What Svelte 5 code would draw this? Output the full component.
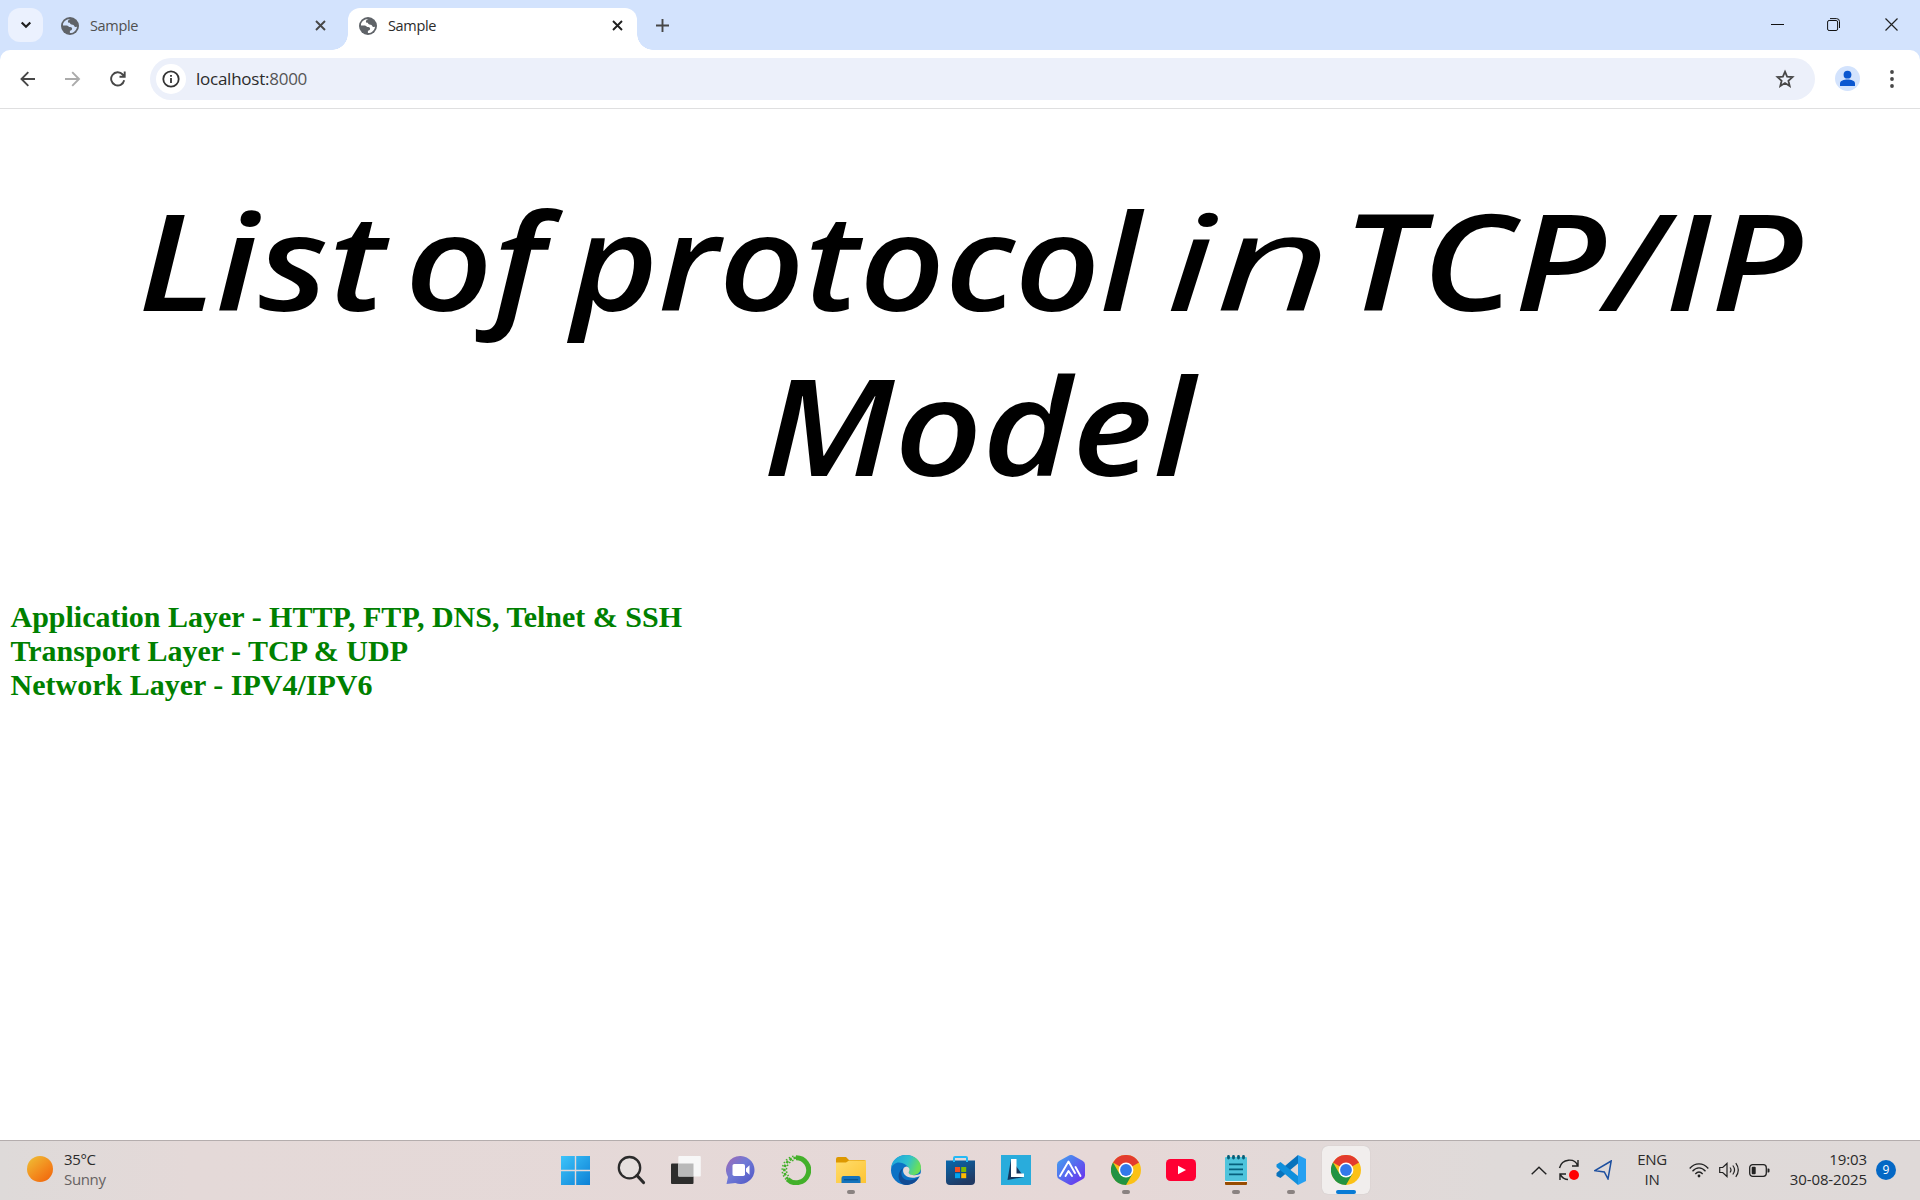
<script>
  const tabs = [
    { title: 'Sample', active: false },
    { title: 'Sample', active: true }
  ];
  const apps = [
    { name: 'start' }, { name: 'search' }, { name: 'taskview' }, { name: 'chat' }, { name: 'ring' },
    { name: 'folder', open: true }, { name: 'edge' }, { name: 'store' }, { name: 'lenovo' }, { name: 'hex' },
    { name: 'chrome', open: true }, { name: 'youtube' }, { name: 'notepad', open: true },
    { name: 'code', open: true }, { name: 'chrome', active: true }
  ];
  const words = [
    { t: 'List', x: 138, y: 202, w: 248 },
    { t: 'of', x: 405, y: 202, w: 140 },
    { t: 'protocol', x: 571, y: 202, w: 570 },
    { t: 'in', x: 1165, y: 202, w: 166, light: true },
    { t: 'TCP/IP', x: 1342, y: 202, w: 460 },
    { t: 'Model', x: 763, y: 367, w: 432 }
  ];
  const layers = [
    'Application Layer - HTTP, FTP, DNS, Telnet & SSH',
    'Transport Layer - TCP & UDP',
    'Network Layer - IPV4/IPV6'
  ];
</script>

<div class="screen">
  <header class="tabstrip">
    <button class="tabsearch" aria-label="Search tabs">
      <svg width="12" height="8" viewBox="0 0 12 8"><path d="M1.7 1.5 6 5.7l4.3-4.2" fill="none" stroke="#1f1f1f" stroke-width="2.2" /></svg>
    </button>
    {#each tabs as tab}
      <div class="tab" class:active={tab.active}>
        <svg class="globe" width="18" height="18" viewBox="0 0 18 18">
          <circle cx="9" cy="9" r="9" fill="#5f6368" />
          <path d="M9.400 1.900C8 2.700 6.900 3.200 6.900 4.500c0 1.300 1 1.400 2 1.300.2 1.600 1.200 1.900 2.700 1.900 1.500 0 1.500 2.200 3 2.300 1 .1 1.400-.5 1.500-1.100-.1 4-3.200 7.200-7.200 7.200v-2.300c1.500-.2 2.300-1 2.200-2.200-.1-1.500-1.600-1.600-2.900-1.700-1-.2-1.200-1.400-2.400-1.400H2C1.800 4.800 5 1.800 9.400 1.900z" fill={tab.active ? '#fff' : '#d3e3fd'} />
          <path d="M3.300 5.300c.8-.8 1.800-1.200 2.700-.9.5 1.300 1.700 2 3 2l.7 1.500c-1.400.5-2.700.2-3.700-.3-1-.3-2.100.1-3.800.2z" fill={tab.active ? '#fff' : '#d3e3fd'} />
        </svg>
        <span>{tab.title}</span>
        <svg class="close" width="11" height="11" viewBox="0 0 11 11"><path d="m1 1 9 9M10 1l-9 9" stroke={tab.active ? '#1f1f1f' : '#474747'} stroke-width="1.9" /></svg>
      </div>
    {/each}
    <svg class="plus" width="13" height="13" viewBox="0 0 13 13"><path d="M6.500 0v13M0 6.500h13" stroke="#474747" stroke-width="1.9" /></svg>
    <div class="window-controls">
      <svg width="13" height="13" viewBox="0 0 13 13"><path d="M0 6.500h13" stroke="#111" /></svg>
      <svg width="13" height="13" viewBox="0 0 13 13" fill="none" stroke="#111"><rect x=".6" y="2.500" width="10" height="10" rx="1.500" /><path d="M3 .6h6.500a3 3 0 0 1 3 3V10" /></svg>
      <svg width="13" height="13" viewBox="0 0 13 13"><path d="m.5.5 12 12M12.500.5l-12 12" stroke="#222" stroke-width="1.200" /></svg>
    </div>
  </header>

  <div class="toolbar-wrap">
    <div class="toolbar">
      <svg class="nav" width="16" height="16" viewBox="0 0 16 16" fill="none" stroke="#474747" stroke-width="1.900"><path d="M15 8H1.800M8.300 1.200 1.500 8l6.800 6.800" /></svg>
      <svg class="nav" width="16" height="16" viewBox="0 0 16 16" fill="none" stroke="#ababab" stroke-width="1.900"><path d="M0 8h13.700M7.200 1.200 14 8l-6.800 6.800" /></svg>
      <svg class="nav" width="16" height="16" viewBox="0 0 16 16" fill="none" stroke="#474747" stroke-width="1.900"><path d="M14.200 9.300A6.600 6.600 0 1 1 12.700 3.500L14.400 5.300M14.700.5v5.200H9.500" /></svg>
      <div class="omnibox">
        <span class="info">
          <svg width="18" height="18" viewBox="0 0 18 18"><circle cx="9" cy="9" r="7.700" fill="none" stroke="#333" stroke-width="1.800" /><path d="M9 8v5M9 5v1.800" stroke="#333" stroke-width="1.800" /></svg>
        </span>
        <span class="url">localhost:<em>8000</em></span>
        <svg class="star" width="20" height="20" viewBox="0 0 20 20"><path d="m10 2.700 2.100 5 5.400.4-4.100 3.600 1.300 5.300-4.700-2.900-4.700 2.900 1.300-5.300-4.100-3.600 5.400-.4z" fill="none" stroke="#474747" stroke-width="1.800" /></svg>
      </div>
      <svg class="profile" width="25" height="25" viewBox="0 0 25 25"><circle cx="12.500" cy="12.500" r="12.500" fill="#d3e3fd" /><circle cx="12.500" cy="8.700" r="3.900" fill="#0b57d0" /><path d="M5 20v-2.500c0-3 4-4 7.500-4s7.500 1 7.500 4V20z" fill="#0b57d0" /></svg>
      <svg class="dots" width="4" height="18" viewBox="0 0 4 18" fill="#474747"><circle cx="2" cy="2" r="1.900" /><circle cx="2" cy="9" r="1.900" /><circle cx="2" cy="16" r="1.900" /></svg>
    </div>
  </div>

  <main>
    <h1>
      <svg width="1920" height="430" viewBox="0 0 1920 430">
        {#each words as word}
          <text class:light={word.light} x={word.x} y={word.y} textLength={word.w} lengthAdjust="spacingAndGlyphs">{word.t}</text>
        {/each}
      </svg>
    </h1>
    <h2>
      {#each layers as layer}
        <span>{layer}</span>
      {/each}
    </h2>
  </main>

  <footer>
    <div class="weather">
      <i></i>
      <div><p>35°C</p><p class="muted">Sunny</p></div>
    </div>
    <nav>
      {#each apps as app}
        <div class="cell">
          <div class="tile" class:current={app.active} class:open={app.open}>
            <svg width="30" height="30" viewBox="0 0 30 30">
              {#if app.name === 'start'}
                <defs><linearGradient id="win" x1="0" y1="0" x2="1" y2="1" gradientUnits="objectBoundingBox"><stop stop-color="#3dc4fa" /><stop offset="1" stop-color="#0d80d5" /></linearGradient></defs>
                <path d="M0 1h13.800v13.800H0zM15.200 1H29v13.800H15.200zM0 16.200h13.800V30H0zM15.200 16.200H29V30H15.200z" fill="url(#win)" />
              {:else if app.name === 'search'}
                <circle cx="13.500" cy="12.700" r="10.700" fill="#e6e0df" stroke="#2b2b2b" stroke-width="2.300" /><path d="m21 20.500 6.500 7" stroke="#2b2b2b" stroke-width="3.200" stroke-linecap="round" />
              {:else if app.name === 'taskview'}
                <rect x="0" y="8.500" width="22.500" height="20.500" rx="1" fill="#2d2d2c" /><rect x="7.300" y="1" width="22.500" height="20.500" rx="1" fill="#f7f7f7" /><path d="M7.300 8.500h15.200v13H7.300z" fill="#b9b9b9" />
              {:else if app.name === 'chat'}
                <defs><linearGradient id="chat" x1="0" y1="0" x2="1" y2="1"><stop stop-color="#a168b3" /><stop offset=".45" stop-color="#6f7ad6" /><stop offset="1" stop-color="#4f55c5" /></linearGradient></defs>
                <path d="M14.800 1a14 14 0 1 1-5.500 27L.5 29 2 22A14 14 0 0 1 14.800 1z" fill="url(#chat)" /><rect x="6.500" y="9" width="12.500" height="12" rx="1.800" fill="#fff" /><path d="m20 13.500 3.500-3.300v9.600l-3.500-3.300z" fill="#fff" />
              {:else if app.name === 'ring'}
                <path d="M15 2.700a12.500 12.500 0 1 1-8.500 21.500" fill="none" stroke="#43b02a" stroke-width="5" /><path d="M7 24A12.500 12.500 0 0 1 15 2.700" fill="none" stroke="#43b02a" stroke-width="2.500" stroke-dasharray="2.500 1.800" /><path d="M5 24.500A14 14 0 0 1 14 1M7.500 21A10 10 0 0 1 14 5" fill="none" stroke="#43b02a" stroke-width="1.500" stroke-dasharray="1.500 2" />
              {:else if app.name === 'folder'}
                <defs><linearGradient id="fold" x1="0" y1="0" x2="1" y2="1"><stop stop-color="#ffdc6c" /><stop offset="1" stop-color="#fdc433" /></linearGradient></defs>
                <path d="M0 4a2 2 0 0 1 2-2h8l3 3h15a2 2 0 0 1 2 2v3H0z" fill="#dd9800" /><path d="M0 7.500h10l3-2h17V28H0z" fill="url(#fold)" /><path d="M5.500 28v-5a2 2 0 0 1 2-2h15a2 2 0 0 1 2 2v5z" fill="#1473bd" /><path d="M8 24.700h14" stroke="#075592" stroke-width="1.300" />
              {:else if app.name === 'edge'}
                <defs><linearGradient id="edge" x1="0" y1="0" x2="1" y2=".3"><stop stop-color="#1ba0df" /><stop offset=".6" stop-color="#2fc1cd" /><stop offset="1" stop-color="#69df5b" /></linearGradient></defs>
                <circle cx="15" cy="15" r="15" fill="#0c72c5" /><path d="M0 13C1 5 7 0 15 0c9 0 15 6 15 12.500 0 5-4 7.500-8 7.500-4 0-6-1.200-4.500-3C19 15 17 8 8 7.500 4 7.500 1.500 10 0 13z" fill="url(#edge)" /><path d="M12.500 13C8 18 10.500 27 21 25c3-.5 5-1.700 7-3C25 28 20 30 15 30 6.500 29 5 17 12.500 13z" fill="#114b94" /><path d="M15.500 11.500c-4 .5-4.300 5-2 8 3.500 4 10 4.200 15.500 1.500l2-.5v-3c-3 2.500-6 3-9.500 2.500-3-.5-4.500-1.500-3.500-3.500 1-2 .5-4.500-2.500-5z" fill="#e6d9d9" />
              {:else if app.name === 'store'}
                <defs><linearGradient id="store" x1="0" y1="0" x2=".5" y2="1"><stop stop-color="#0868ad" /><stop offset="1" stop-color="#203963" /></linearGradient></defs>
                <path d="M0 5.500h29V26a4 4 0 0 1-4 4H4a4 4 0 0 1-4-4z" fill="url(#store)" /><path d="M8 7V3a1 1 0 0 1 1-1h11a1 1 0 0 1 1 1v4" fill="none" stroke="#25b9f5" stroke-width="2" /><path d="M9 12h5v5H9z" fill="#f25022" /><path d="M15.200 12h5v5h-5z" fill="#7fba00" /><path d="M9 18.200h5v5H9z" fill="#00a4ef" /><path d="M15.200 18.200h5v5h-5z" fill="#ffb900" />
              {:else if app.name === 'lenovo'}
                <path d="M0 0h30v30H0z" fill="#29acdc" /><path d="m10 4-3.500 21L23 22z" fill="#14365e" /><path d="M10 4h5.500v14.500H23V22H10z" fill="#fff" />
              {:else if app.name === 'hex'}
                <defs><linearGradient id="hex" x1="0" y1="0" x2="1" y2="1"><stop stop-color="#41a6ef" /><stop offset="1" stop-color="#6e28ee" /></linearGradient></defs>
                <path d="M12.500.7a5 5 0 0 1 5 0l9 5A4.500 4.500 0 0 1 29 9.500v11a4.500 4.500 0 0 1-2.500 3.800l-9 5a5 5 0 0 1-5 0l-9-5A4.500 4.500 0 0 1 1 20.500v-11a4.500 4.500 0 0 1 2.500-3.800z" fill="url(#hex)" /><path d="m4 21 8.500-14.500L19 18M9.500 21l3-5 3.500 5M19.500 12l5 9" fill="none" stroke="#fff" stroke-width="1.900" stroke-linecap="round" stroke-linejoin="round" />
              {:else if app.name === 'chrome'}
                <circle cx="15" cy="15" r="15" fill="#fbc116" /><path d="M15 15 2 7.500A15 15 0 0 1 28 7.500z" fill="#e33b2e" /><path d="M2 7.500A15 15 0 0 0 15 30l6.500-11.200L15 15 8.500 18.800z" fill="#229342" /><circle cx="15" cy="15" r="7.400" fill="#fff" /><circle cx="15" cy="15" r="5.900" fill="#3279ea" />
              {:else if app.name === 'youtube'}
                <rect y="4" width="30" height="22" rx="4.500" fill="#ff0033" /><path d="m12 10.800 8 4.200-8 4.200z" fill="#fff" />
              {:else if app.name === 'notepad'}
                <rect x="4" y="25" width="22" height="5" rx="1" fill="#984c00" /><path d="M4 25h22v2H4z" fill="#f8f3ee" /><rect x="4" y="2" width="22" height="24" rx="1" fill="#4fc4dc" /><path d="M8 9.300h14M8 14.300h14M8 19.300h14" stroke="#07607d" stroke-width="1.800" /><path d="M7.500 1.500v1.500M12.500 1.500v1.500M17.500 1.500v1.500M22.500 1.500v1.500" stroke="#075d76" stroke-width="2.800" stroke-linecap="round" />
              {:else}
                <path d="M22 0v8.500L4.500 23 .5 21v-3z" fill="#0872bc" /><path d="M.5 9.500 4.500 7 22 21v9L.5 12z" fill="#108fdc" /><path d="m22 0 8 4v22l-8 4z" fill="#26a0f1" />
              {/if}
            </svg>
            <b class="mark"></b>
          </div>
        </div>
      {/each}
    </nav>
    <div class="tray">
      <svg width="16" height="9" viewBox="0 0 16 9"><path d="m.7 8.300 7.300-7 7.300 7" fill="none" stroke="#222" stroke-width="1.400" /></svg>
      <svg class="sync" width="22" height="22" viewBox="0 0 22 22" fill="none" stroke="#222" stroke-width="1.400"><path d="M1.500 9C4-1 17-1 19.500 6.500M20 1v6h-6M2 21v-6h6M2.500 16c2 3 4 4.500 7.500 4.500" /><circle cx="16" cy="16" r="5" fill="#f00" stroke="none" /></svg>
      <svg class="locate" width="18" height="20" viewBox="0 0 18 20"><path d="M17.200 1 .9 10.700l9.400 1.200 3.700 7z" fill="none" stroke="#1c4f9f" stroke-width="1.500" /></svg>
      <div class="lang">ENG<br />IN</div>
      <svg class="wifi" width="20" height="15" viewBox="0 0 20 15" fill="none" stroke="#222" stroke-width="1.300"><path d="M.7 5.500c5.200-6.300 13.400-6.300 18.600 0M3.500 8.300c4-4.600 9-4.600 13 0M6.300 11c2.500-2.700 4.900-2.700 7.400 0" /><circle cx="10" cy="13" r="1.400" fill="#222" stroke="none" /></svg>
      <svg class="sound" width="21" height="16" viewBox="0 0 21 16" fill="none" stroke="#222" stroke-width="1.200"><path d="M.7 5.500h3L8 1.500v13l-4.300-4h-3zM11 5.500q2 2.500 0 5M13.800 3.500q3.500 4.500 0 9M16.800 1.200q5 6.800 0 13.600" /></svg>
      <svg class="battery" width="21" height="13" viewBox="0 0 21 13"><rect x=".7" y=".7" width="16.600" height="11.600" rx="3" fill="none" stroke="#222" stroke-width="1.300" /><rect x="2.700" y="2.800" width="4" height="7.500" rx="1" fill="#222" /><path d="M18.500 4.500h1a1 1 0 0 1 1 1v2a1 1 0 0 1-1 1h-1z" fill="#222" /></svg>
      <div class="clock">19:03<br />30-08-2025</div>
      <div class="badge">9</div>
    </div>
  </footer>
</div>

<style>
  :global(body) { margin: 0; overflow: hidden; }
  .screen { width: 1920px; height: 1200px; display: flex; flex-direction: column; background: #fff; font-family: 'Open Sans', 'Noto Sans', sans-serif; font-size: 15px; overflow: hidden; }
  svg { display: block; flex: none; }
  .tabstrip { height: 50px; background: #d3e3fd; display: flex; align-items: flex-start; flex: none; box-sizing: border-box; padding: 8px 0 0 8px; }
  .tabsearch { width: 35px; height: 34px; border: 0; padding: 0; border-radius: 12px; background: #ebf1fe; display: grid; place-items: center; }
  .tab { height: 42px; width: 289px; box-sizing: border-box; padding: 0 14px 7px 11px; display: flex; align-items: center; color: #505050; position: relative; margin-left: 7px; font-size: 14.500px; letter-spacing: -.35px; }
  .tab span { margin-left: 11px; }
  .tab .close { margin-left: auto; }
  .tab:not(.active) { width: 291px; padding-right: 15px; }
  .tab.active { color: #2b2b2b; background: #fff; border-radius: 12px 12px 0 0; }
  .tab.active::before, .tab.active::after { content: ''; position: absolute; bottom: 0; width: 16px; height: 16px; }
  .tab.active::before { left: -16px; background: radial-gradient(circle at 0 0, transparent 15.500px, #fff 16px); }
  .tab.active::after { right: -16px; background: radial-gradient(circle at 100% 0, transparent 15.500px, #fff 16px); }
  .plus { margin: 11px 0 0 19px; }
  .window-controls { margin-left: auto; display: flex; gap: 44px; padding: 10px 22px 0 0; }
  .window-controls svg:nth-child(2) { margin: 0 1px 0 -1px; }
  .toolbar-wrap { background: #d3e3fd; flex: none; }
  .toolbar { height: 59px; box-sizing: border-box; border-bottom: 1px solid #dfdfe0; border-radius: 10px 10px 0 0; background: #fff; display: flex; align-items: center; padding: 0 26px 1px 20px; }
  .nav { margin-right: 29px; }
  .omnibox { width: 1665px; height: 42px; border-radius: 21px; background: #ecf0fa; display: flex; align-items: center; box-sizing: border-box; padding: 0 20px 0 6px; margin-left: -5px; }
  .info { width: 30px; height: 30px; background: #fff; border-radius: 50%; display: grid; place-items: center; }
  .url { margin-left: 10px; font-size: 17px; letter-spacing: -.25px; color: #2b2b2b; }
  .url em { font-style: normal; color: #555; }
  .star { margin-left: auto; }
  .profile { margin-left: 20px; }
  .dots { margin-left: auto; }
  main { height: 1031px; flex: none; overflow: hidden; }
  h1 { margin: 0; height: 491px; }
  h1 text { font: italic 600 134px 'Open Sans', sans-serif; fill: #000; }
  h1 text.light { font-weight: 400; }
  h2 { margin: 0; padding-left: 10.500px; font: bold 30px/34px 'Liberation Serif', serif; color: #008000; display: flex; flex-direction: column; }
  footer { flex: 1; box-sizing: border-box; border-top: 1px solid #b4adad; background: linear-gradient(90deg, #dedad9, #e4d9d8 10%, #e6d8d7 58%, #dfdad9 78%, #dfd9d8); display: flex; align-items: flex-start; color: #2b2b2b; }
  .weather { width: 548px; display: flex; box-sizing: border-box; padding: 8px 0 0 27px; line-height: 20px; }
  .weather i { width: 26px; height: 26px; margin: 7px 11px 0 0; border-radius: 50%; background: linear-gradient(140deg, #efb832 10%, #f38a1d 55%, #f16008); }
  .weather p { margin: 0; letter-spacing: -.35px; }
  .weather .muted { color: #666262; }
  nav { display: flex; padding-top: 5px; }
  .cell { width: 55px; display: grid; place-items: center; }
  .tile { width: 48px; height: 48px; border-radius: 6px; display: flex; flex-direction: column; align-items: center; box-sizing: border-box; padding-top: 9px; }
  .tile.current { background: #f1eeed; box-shadow: 0 0 1px #bbb; }
  .mark { margin-top: 5px; height: 4px; border-radius: 2px; }
  .open .mark { width: 8px; background: #8a8281; }
  .current .mark { width: 20px; background: #087bd5; }
  .tray { display: flex; align-items: center; height: 58px; margin-left: 158px; line-height: 20px; }
  .sync { margin-left: 11px; }
  .locate { margin-left: 14px; }
  .lang { width: 40px; margin-left: 20px; text-align: center; letter-spacing: -.3px; padding-bottom: 2px; }
  .wifi { margin-left: 17px; }
  .sound { margin-left: 10px; }
  .battery { margin-left: 9px; }
  .clock { width: 90px; margin-left: 7px; text-align: right; letter-spacing: -.1px; padding-bottom: 2px; }
  .badge { width: 20px; height: 20px; border-radius: 50%; background: #0468c5; color: #fff; font-size: 12px; text-align: center; margin-left: 9px; line-height: 20px; }
</style>
